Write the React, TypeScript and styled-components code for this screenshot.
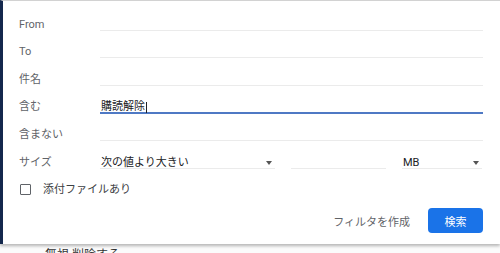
import React from 'react';
import styled, { createGlobalStyle } from 'styled-components';

const GlobalStyle = createGlobalStyle`
  html, body {
    margin: 0;
    padding: 0;
    background: #f1f1f1;
  }
  body {
    font-family: Roboto, "Noto Sans CJK JP", Arial, sans-serif;
    width: 500px;
    height: 253px;
    overflow: hidden;
  }
`;

const Panel = styled.div`
  box-sizing: border-box;
  width: 500px;
  height: 244px;
  background: #fff;
  border-top: 1px solid #d2d2d2;
  border-left: 3px solid #14284d;
  box-shadow: 0 2px 3px rgba(0, 0, 0, 0.28);
  padding: 2px 17px 0 16px;
  position: relative;
  z-index: 1;
`;

const Row = styled.div`
  display: grid;
  grid-template-columns: 81px 1fr;
  align-items: end;
  height: 27.6px;
`;

const Label = styled.div`
  font-size: 11px;
  line-height: 10px;
  height: 10px;
  color: #5f6368;
  border-bottom: 1px solid transparent;
`;

const Field = styled.div<{ $focused?: boolean }>`
  display: flex;
  align-items: center;
  font-size: 11px;
  line-height: 10px;
  color: #202124;
  padding: 0 1px;
  border-bottom: ${(p) => (p.$focused ? '2px solid #4f79c4' : '1px solid #ebebeb')};
  margin-bottom: ${(p) => (p.$focused ? '-1px' : '0')};
  height: 10px;
`;

const Caret = styled.span`
  display: inline-block;
  width: 1px;
  height: 11px;
  background: #202124;
  margin-left: 1px;
`;

const SizeFields = styled.div`
  display: grid;
  grid-template-columns: 175px 95px 80px;
  column-gap: 16px;
`;

const Select = styled(Field)`
  justify-content: space-between;
  padding-right: 3px;
`;

const Arrow = styled.span`
  width: 0;
  height: 0;
  border-left: 3px solid transparent;
  border-right: 3px solid transparent;
  border-top: 4px solid #555;
`;

const CheckRow = styled.label`
  display: flex;
  align-items: center;
  gap: 12px;
  margin-top: 14px;
  padding-left: 1px;
  font-size: 11px;
  line-height: 14px;
  color: #3c4043;
`;

const Box = styled.span`
  box-sizing: border-box;
  width: 11px;
  height: 11px;
  border: 1.5px solid #5f6368;
  border-radius: 1px;
`;

const Actions = styled.div`
  display: flex;
  justify-content: flex-end;
  align-items: center;
  gap: 18px;
  margin-top: 11.5px;
`;

const TextButton = styled.button`
  background: none;
  border: none;
  padding: 0;
  font-family: inherit;
  font-size: 11px;
  color: #5f6368;
`;

const PrimaryButton = styled.button`
  width: 55px;
  height: 25px;
  border: none;
  border-radius: 4px;
  background: #1a73e8;
  color: #fff;
  font-family: inherit;
  font-size: 11px;
  padding: 0;
`;

const BackStrip = styled.div`
  height: 9px;
  overflow: hidden;
  padding-left: 45px;
  font-size: 12px;
  line-height: 18px;
  color: #333;
  background: #fbfbfb;
`;

const BackText = styled.div`
  margin-top: 2px;
`;

const fields = ['From', 'To', '件名'];

export default function App() {
  return (
    <>
      <GlobalStyle />
      <Panel>
        {fields.map((f) => (
          <Row key={f}>
            <Label>{f}</Label>
            <Field />
          </Row>
        ))}
        <Row>
          <Label>含む</Label>
          <Field $focused>
            購読解除
            <Caret />
          </Field>
        </Row>
        <Row>
          <Label>含まない</Label>
          <Field />
        </Row>
        <Row>
          <Label>サイズ</Label>
          <SizeFields>
            <Select>
              次の値より大きい
              <Arrow />
            </Select>
            <Field />
            <Select>
              MB
              <Arrow />
            </Select>
          </SizeFields>
        </Row>
        <CheckRow>
          <Box />
          添付ファイルあり
        </CheckRow>
        <Actions>
          <TextButton>フィルタを作成</TextButton>
          <PrimaryButton>検索</PrimaryButton>
        </Actions>
      </Panel>
      <BackStrip>
        <BackText>無視 削除する</BackText>
      </BackStrip>
    </>
  );
}
